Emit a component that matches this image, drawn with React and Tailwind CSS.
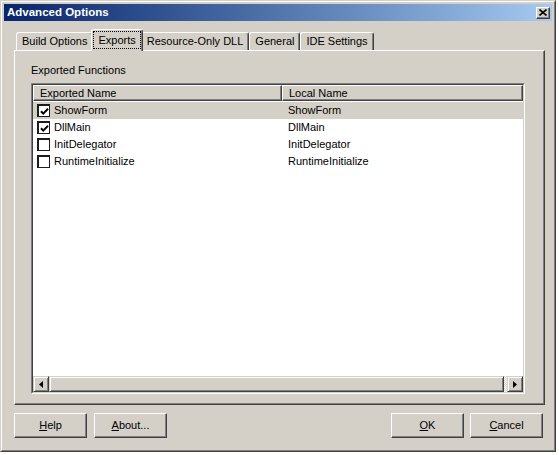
import React from "react";

const font = { fontFamily: '"Liberation Sans", Arial, sans-serif' };

const tabs = [
  { name: "Build Options" },
  { name: "Exports", active: true },
  { name: "Resource-Only DLL" },
  { name: "General" },
  { name: "IDE Settings" },
];

const rows = [
  { name: "ShowForm", local: "ShowForm", checked: true, selected: true },
  { name: "DllMain", local: "DllMain", checked: true },
  { name: "InitDelegator", local: "InitDelegator" },
  { name: "RuntimeInitialize", local: "RuntimeInitialize" },
];

const CheckBox = ({ checked }) => (
  <div className="w-[13px] h-[13px] shrink-0 bg-white border-t-2 border-l-2 border-r border-b border-[#1c1c1c] flex items-center justify-center">
    {checked && (
      <svg width="9" height="9" viewBox="0 0 9 9">
        <path d="M1 4.2 L3.3 6.6 L8 1.8" fill="none" stroke="#000" strokeWidth="2" />
      </svg>
    )}
  </div>
);

const Button = ({ children }) => (
  <div className="w-[73px] h-[25px] border border-t-white border-l-white border-r-[#404040] border-b-[#404040] shadow-[inset_-1px_-1px_#808080] flex items-center justify-center text-[11px] text-black">
    {children}
  </div>
);

const Arrow = ({ dir }) => (
  <div className="w-[16px] h-[16px] shrink-0 bg-[#d4d0c8] border border-t-[#d4d0c8] border-l-[#d4d0c8] border-r-[#404040] border-b-[#404040] shadow-[inset_1px_1px_white,inset_-1px_-1px_#808080] flex items-center justify-center">
    <svg width="4" height="7" viewBox="0 0 4 7">
      {dir === "left" ? (
        <path d="M4 0 L0 3.5 L4 7 Z" fill="#000" />
      ) : (
        <path d="M0 0 L4 3.5 L0 7 Z" fill="#000" />
      )}
    </svg>
  </div>
);

export default function App() {
  return (
    <div className="w-[559px] h-[455px] bg-white" style={font}>
      <div className="w-[556px] h-[452px] bg-[#d4d0c8] border border-t-[#d4d0c8] border-l-[#d4d0c8] border-r-[#404040] border-b-[#404040]">
        <div className="w-full h-full border border-t-white border-l-white border-r-[#808080] border-b-[#808080] p-[2px] flex flex-col">
          {/* Title bar */}
          <div className="h-[17px] shrink-0 bg-gradient-to-r from-[#0a246a] to-[#a6caf0] flex items-center justify-between pl-[3px] pr-[2px]">
            <span className="text-white font-bold text-[11.5px] leading-none">Advanced Options</span>
            <div className="w-[14px] h-[12px] bg-[#d4d0c8] border border-t-white border-l-white border-r-[#404040] border-b-[#404040] shadow-[inset_-1px_-1px_#808080] flex items-center justify-center">
              <svg width="8" height="7" viewBox="0 0 8 7">
                <path d="M0.5 0.5 L7.5 6.5 M7.5 0.5 L0.5 6.5" stroke="#000" strokeWidth="1.6" />
              </svg>
            </div>
          </div>

          <div className="pl-[10px] pt-[11px] flex flex-col">
            {/* Tabs */}
            <div className="h-[18px] flex items-end pl-[2px]">
              {tabs.map((t) =>
                t.active ? (
                  <div
                    key={t.name}
                    className="relative z-10 -mb-px -mx-[2px] h-[22px] bg-[#d4d0c8] border-t border-l border-r border-t-white border-l-white border-r-[#404040] rounded-t-[3px] shadow-[inset_-1px_0_#808080] px-[1px] pt-[1px] pb-[2px] flex"
                  >
                    <div className="flex-1 border border-dotted border-black flex items-center px-[4px] text-[11px] text-black">
                      {t.name}
                    </div>
                  </div>
                ) : (
                  <div
                    key={t.name}
                    className="h-[18px] bg-[#d4d0c8] border-t border-l border-r border-t-white border-l-white border-r-[#404040] rounded-t-[3px] shadow-[inset_-1px_0_#808080] px-[5px] flex items-center text-[11px] text-black"
                  >
                    {t.name}
                  </div>
                )
              )}
            </div>

            {/* Panel */}
            <div className="w-[531px] h-[355px] border border-t-white border-l-white border-r-[#404040] border-b-[#404040] shadow-[inset_-1px_-1px_#808080] pl-[16px] pt-[13px] flex flex-col">
              <div className="text-[11px] leading-[13px] text-black">Exported Functions</div>
              <div className="mt-[6px] w-[494px] h-[311px] border border-t-[#808080] border-l-[#808080] border-r-white border-b-white">
                <div className="w-full h-full border border-t-[#404040] border-l-[#404040] border-r-[#d4d0c8] border-b-[#d4d0c8] bg-white flex flex-col">
                  {/* Header */}
                  <div className="h-[16px] flex shrink-0">
                    <div className="w-[249px] h-full bg-[#d4d0c8] border border-t-white border-l-white border-r-[#404040] border-b-[#404040] shadow-[inset_-1px_-1px_#808080] pl-[6px] flex items-center text-[11px] text-black">
                      Exported Name
                    </div>
                    <div className="flex-1 h-full bg-[#d4d0c8] border border-t-white border-l-white border-r-[#404040] border-b-[#404040] shadow-[inset_-1px_-1px_#808080] pl-[6px] flex items-center text-[11px] text-black">
                      Local Name
                    </div>
                  </div>
                  {/* Rows */}
                  <div className="flex-1 flex flex-col pt-px">
                    {rows.map((r) => (
                      <div
                        key={r.name}
                        className={`h-[17px] flex items-center text-[11px] text-black ${r.selected ? "bg-[#d4d0c8]" : ""}`}
                      >
                        <div className="w-[249px] flex items-center pl-[4px] gap-[4px]">
                          <CheckBox checked={r.checked} />
                          <span>{r.name}</span>
                        </div>
                        <div className="pl-[6px]">{r.local}</div>
                      </div>
                    ))}
                  </div>
                  {/* Horizontal scrollbar */}
                  <div className="h-[16px] shrink-0 flex">
                    <Arrow dir="left" />
                    <div className="flex-1 flex bg-[repeating-conic-gradient(#d4d0c8_0_25%,#ffffff_0_50%)] bg-[length:2px_2px]">
                      <div className="w-[455px] h-full bg-[#d4d0c8] border border-t-[#d4d0c8] border-l-[#d4d0c8] border-r-[#404040] border-b-[#404040] shadow-[inset_1px_1px_white,inset_-1px_-1px_#808080]" />
                    </div>
                    <Arrow dir="right" />
                  </div>
                </div>
              </div>
            </div>

            {/* Buttons */}
            <div className="mt-[8px] w-[529px] flex">
              <Button>
                <span><u>H</u>elp</span>
              </Button>
              <div className="ml-[7px]">
                <Button>
                  <span><u>A</u>bout...</span>
                </Button>
              </div>
              <div className="ml-auto flex gap-[6px]">
                <Button>
                  <span><u>O</u>K</span>
                </Button>
                <Button>
                  <span><u>C</u>ancel</span>
                </Button>
              </div>
            </div>
          </div>
        </div>
      </div>
    </div>
  );
}
